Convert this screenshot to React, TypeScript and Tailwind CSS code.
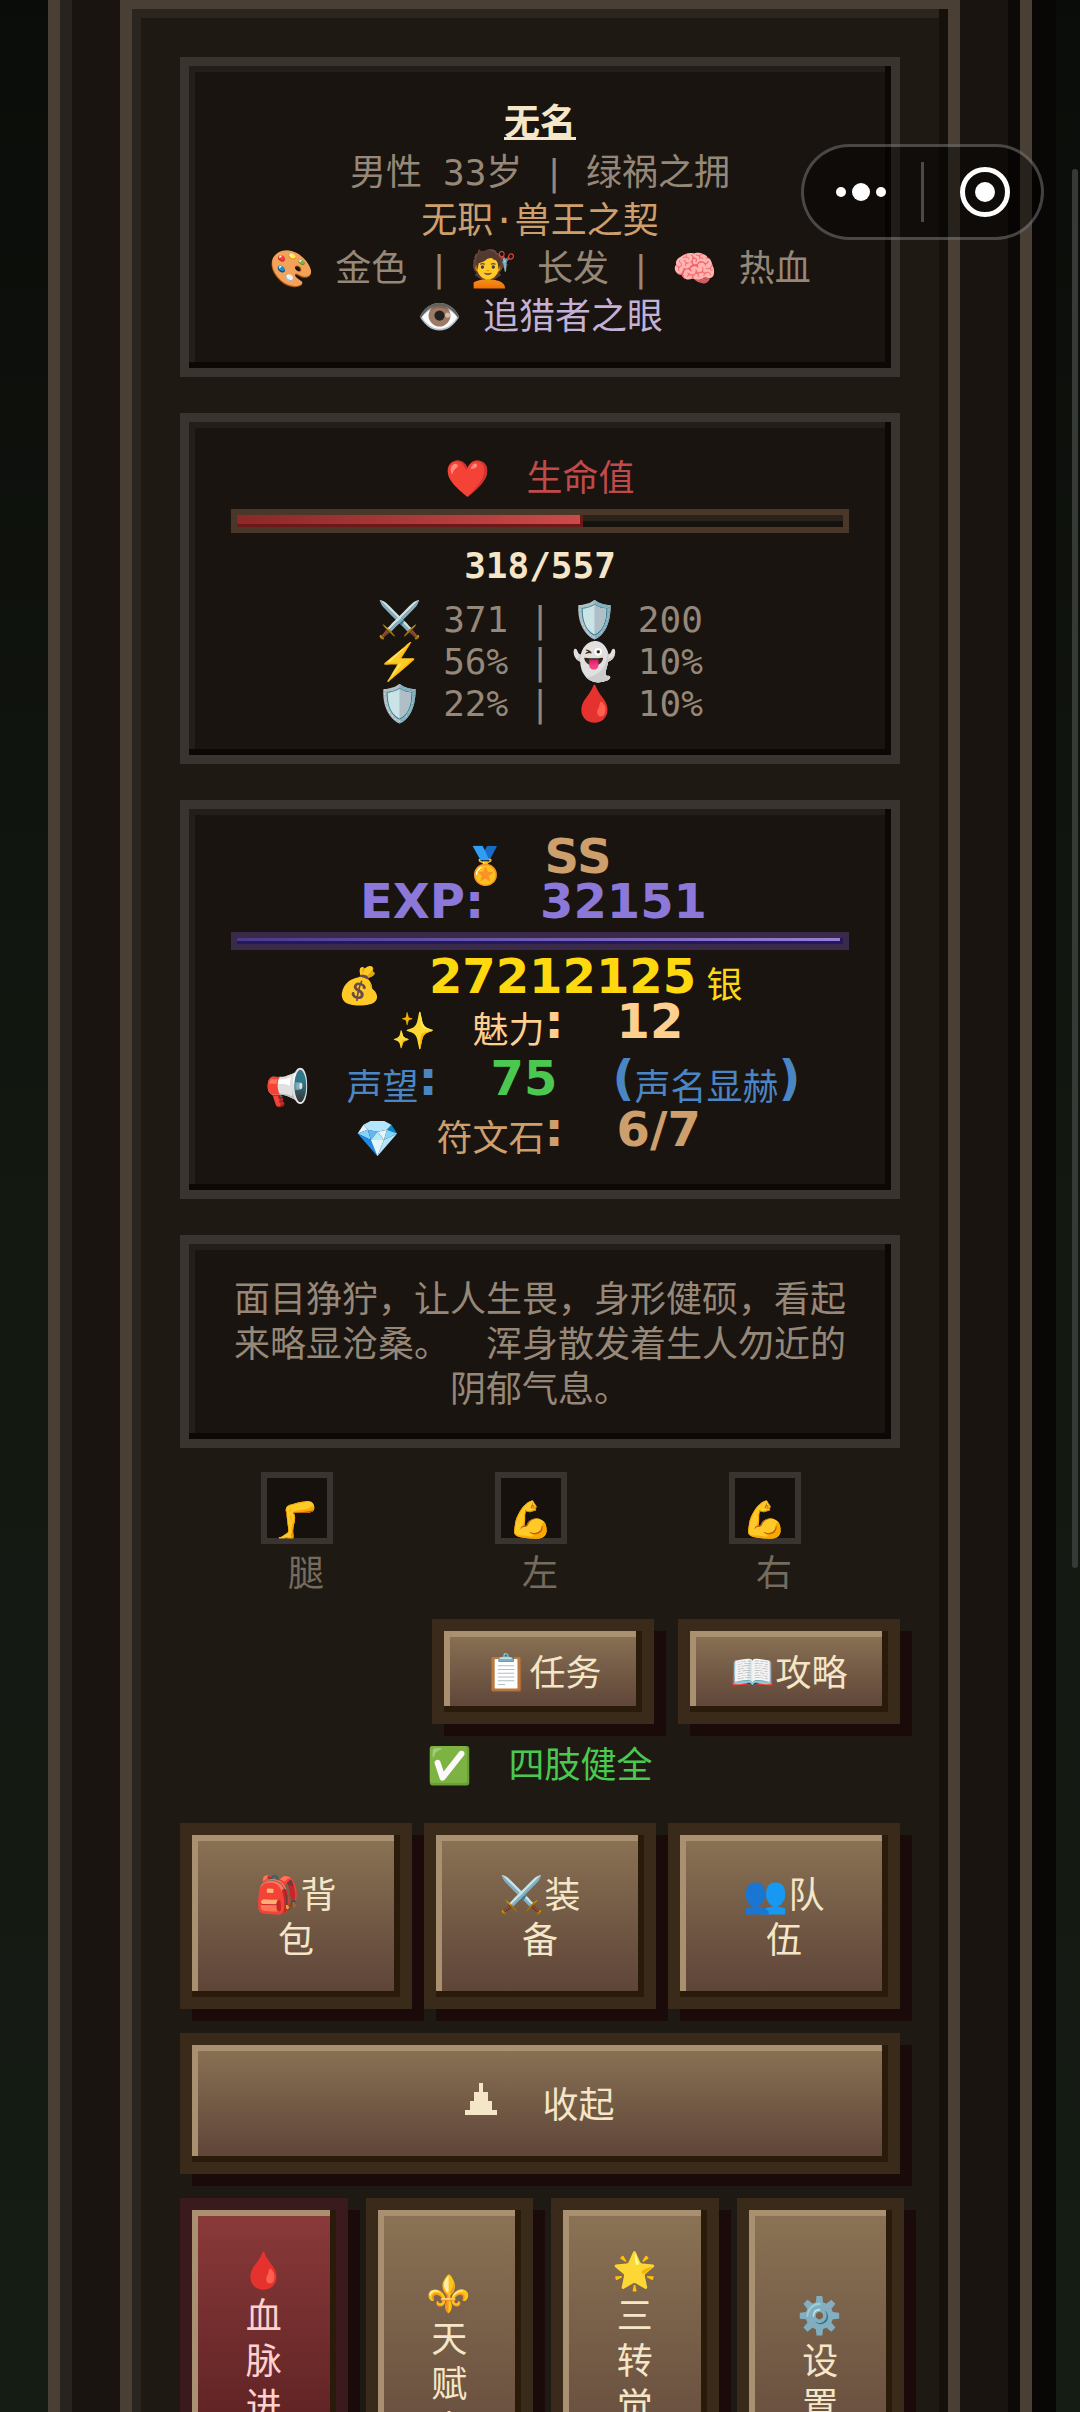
import type { ReactNode } from 'react'

const limbs = [
  { id: 'leg', icon: '🦵', label: '腿' },
  { id: 'left', icon: '💪', label: '左' },
  { id: 'right', icon: '💪', label: '右' },
]

const mainActions = [
  { icon: '🎒', first: '背', second: '包' },
  { icon: '⚔️', first: '装', second: '备' },
  { icon: '👥', first: '队', second: '伍' },
]

const moreActions = [
  { icon: '🩸', label: '血脉进化', danger: true },
  { icon: '⚜️', label: '天赋点', danger: false },
  { icon: '🌟', label: '三转觉醒', danger: false },
  { icon: '⚙️', label: '设置', danger: false },
]

const battleStats = [
  { icon: '⚔️', value: '371', icon2: '🛡️', value2: '200' },
  { icon: '⚡', value: '56%', icon2: '👻', value2: '10%' },
  { icon: '🛡️', value: '22%', icon2: '🩸', value2: '10%' },
]

const hp = 318
const maxHp = 557

const Emoji = ({ children }: { children: ReactNode }) => (
  <span className="w-[45px] shrink-0 text-center font-['Noto_Color_Emoji',sans-serif]">{children}</span>
)

const Card = ({ children }: { children: ReactNode }) => (
  <section className="border-[9px] border-[#393430] bg-[#1a1410] px-[42px] pb-[27px] pt-[33px] shadow-[inset_-6px_-6px_0_#0d0805,inset_6px_6px_0_#231e1a]">
    {children}
  </section>
)

const Pixel = ({ children, className = '' }: { children: ReactNode; className?: string }) => (
  <span className={`font-['DejaVu_Sans',sans-serif] text-[48px] font-bold leading-7 ${className}`}>{children}</span>
)

const StoneButton = ({
  children,
  className = '',
  danger = false,
}: {
  children: ReactNode
  className?: string
  danger?: boolean
}) => {
  const tone = danger
    ? 'border-[#3a1a1c] from-[#8b3a3a] to-[#4f1a1c] text-[#ffd0d0]'
    : 'border-[#3a2a1a] from-[#8b7355] to-[#5c4337] text-[#f5e6c8]'
  return (
    <button
      type="button"
      className={`flex items-center justify-center border-[12px] bg-linear-to-b ${tone} pt-[3px] leading-[45px] shadow-[12px_12px_0_#1a0a0a,inset_-6px_-6px_0_#2a1a0a,inset_6px_6px_0_#a89070] ${className}`}
    >
      {children}
    </button>
  )
}

const ProfileCard = () => (
  <Card>
    <div className="flex flex-col items-center leading-[48px] text-[#968878]">
      <h1 className="mb-[2px] font-bold text-[#f5e6c8] underline decoration-[3px] underline-offset-2">无名</h1>
      <p className="flex gap-[21px]">
        <span>男性</span>
        <span>33岁</span>
        <span>|</span>
        <span>绿祸之拥</span>
      </p>
      <p className="text-[#cd9f6c]">无职·兽王之契</p>
      <p className="flex gap-[21px]">
        <Emoji>🎨</Emoji>
        <span>金色</span>
        <span>|</span>
        <Emoji>💇</Emoji>
        <span>长发</span>
        <span>|</span>
        <Emoji>🧠</Emoji>
        <span>热血</span>
      </p>
      <p className="flex gap-[21px] text-[#c4b2d6]">
        <Emoji>👁️</Emoji>
        <span>追猎者之眼</span>
      </p>
    </div>
  </Card>
)

const HealthCard = () => (
  <Card>
    <p className="flex justify-center gap-9 leading-[48px] text-[#c04a4a]">
      <Emoji>❤️</Emoji>
      <span>生命值</span>
    </p>
    <div className="mt-[6px] h-6 border-[6px] border-[#4a3728] bg-[#15110d] shadow-[inset_0_6px_0_#29231c]">
      <div
        className="h-full bg-linear-to-r from-[#8b2828] to-[#cc4a4a] shadow-[inset_-3px_-3px_0_#6b1818]"
        style={{ width: `${(hp / maxHp) * 100}%` }}
      />
    </div>
    <p className="mt-3 text-center font-bold leading-[42px] text-[#f5e6c8]">
      {hp}/{maxHp}
    </p>
    <div className="mb-[3px] mt-3 leading-[42px] text-[#968878]">
      {battleStats.map((row) => (
        <p key={row.value} className="flex justify-center gap-[21px]">
          <Emoji>{row.icon}</Emoji>
          <span>{row.value}</span>
          <span>|</span>
          <Emoji>{row.icon2}</Emoji>
          <span>{row.value2}</span>
        </p>
      ))}
    </div>
  </Card>
)

const WealthCard = () => (
  <Card>
    <div className="leading-[48px] text-[#cd9f6c]">
      <p className="flex h-[45px] items-start justify-center gap-9">
        <Emoji>🏅</Emoji>
        <Pixel className="w-[72px]">SS</Pixel>
      </p>
      <p className="flex h-[45px] items-start justify-center gap-9 text-[#8c78d8]">
        <Pixel className="w-36">EXP:</Pixel>
        <Pixel className="w-[180px]">32151</Pixel>
      </p>
      <div className="h-[18px] border-[6px] border-[#3a2a4a] bg-[#15110d]">
        <div className="h-full bg-linear-to-r from-[#4a3a8a] to-[#9a7ed8] shadow-[inset_-3px_-3px_0_#221a5c]" />
      </div>
      <p className="mt-3 flex h-[45px] items-start justify-center text-[#ffd90f]">
        <Emoji>💰</Emoji>
        <Pixel className="ml-9 w-[288px] text-center">27212125</Pixel>
        <span>银</span>
      </p>
      <p className="flex h-[57px] items-start justify-center text-[#ffcf8f]">
        <Emoji>✨</Emoji>
        <span className="ml-9">魅力</span>
        <Pixel className="w-[72px]">:</Pixel>
        <Pixel className="w-[72px]">12</Pixel>
      </p>
      <p className="flex h-[51px] items-start justify-center text-[#4a86c4]">
        <Emoji>📢</Emoji>
        <span className="ml-9">声望</span>
        <Pixel className="w-[72px]">:</Pixel>
        <Pixel className="w-[72px] text-[#4ac850]">75</Pixel>
        <Pixel className="w-[72px] text-right">(</Pixel>
        <span>声名显赫</span>
        <Pixel className="w-9">)</Pixel>
      </p>
      <p className="flex h-[48px] items-start justify-center">
        <Emoji>💎</Emoji>
        <span className="ml-9">符文石</span>
        <Pixel className="w-[72px]">:</Pixel>
        <Pixel className="w-[108px]">6/7</Pixel>
      </p>
    </div>
  </Card>
)

const CapsuleMenu = () => (
  <div className="fixed right-9 top-36 flex h-24 w-[243px] items-center rounded-full border-[3px] border-white/25 bg-black/45">
    <button type="button" aria-label="更多" className="flex flex-1 items-center justify-center gap-[6px] pr-1">
      <span className="size-[10px] rounded-full bg-white" />
      <span className="size-[18px] rounded-full bg-white" />
      <span className="size-[10px] rounded-full bg-white" />
    </button>
    <span className="h-[60px] w-[3px] bg-white/25" />
    <button type="button" aria-label="关闭" className="flex flex-1 justify-center pl-1">
      <svg viewBox="0 0 50 50" className="size-[50px]" fill="none">
        <circle cx="25" cy="25" r="22.5" stroke="#fff" strokeWidth="5" />
        <circle cx="25" cy="25" r="10" fill="#fff" />
      </svg>
    </button>
  </div>
)

const App = () => {
  return (
    <div className="h-screen overflow-y-auto bg-linear-to-b from-[#0a0c09] via-[#131811] to-[#151c14] px-12 font-['DejaVu_Sans_Mono','Noto_Sans_CJK_SC',monospace] text-[36px] [scrollbar-width:none]">
      <div className="border-x-[12px] border-[#4a3f35] bg-[#1a1410] px-[60px] shadow-[24px_0_0_#080705,inset_-12px_0_0_#0d0907,inset_12px_0_0_#28231e]">
        <main className="border-x-[12px] border-t-[9px] border-[#4a3f35] bg-[#1e1913] px-12 pb-12 pt-12 shadow-[inset_-9px_0_0_#14110a,inset_9px_9px_0_#2a251f]">
          <div className="flex flex-col gap-9">
            <ProfileCard />
            <HealthCard />
            <WealthCard />
            <Card>
              <p className="text-center leading-[45px] text-[#968878] [text-spacing-trim:space-all]">
                面目狰狞，让人生畏，身形健硕，看起来略显沧桑。　浑身散发着生人勿近的阴郁气息。
              </p>
            </Card>
          </div>

          <div className="mr-[18px] mt-6 grid grid-cols-3">
            {limbs.map((limb) => (
              <div key={limb.id} className="flex flex-col items-center">
                <div className="flex size-[72px] items-end justify-center border-[6px] border-[#393430] bg-[#16110d] leading-9">
                  <Emoji>{limb.icon}</Emoji>
                </div>
                <span className="mt-[6px] pl-[18px] leading-[48px] text-[#756b5e]">{limb.label}</span>
              </div>
            ))}
          </div>

          <div className="ml-[252px] mt-[21px] grid grid-cols-2 gap-6">
            <StoneButton className="h-[105px]">
              <Emoji>📋</Emoji>
              <span>任务</span>
            </StoneButton>
            <StoneButton className="h-[105px]">
              <Emoji>📖</Emoji>
              <span>攻略</span>
            </StoneButton>
          </div>

          <p className="mt-[18px] flex justify-center gap-9 leading-[48px] text-[#4ac850]">
            <Emoji>✅</Emoji>
            <span>四肢健全</span>
          </p>

          <div className="mt-[33px] grid grid-cols-3 gap-3">
            {mainActions.map((action) => (
              <StoneButton key={action.icon} className="h-[186px] flex-col">
                <span className="flex">
                  <Emoji>{action.icon}</Emoji>
                  {action.first}
                </span>
                <span>{action.second}</span>
              </StoneButton>
            ))}
          </div>

          <StoneButton className="mt-6 h-[141px] w-full gap-[45px]">
            <span className="h-[45px]">
              <svg viewBox="0 0 32 32" className="size-8" fill="currentColor" shapeRendering="crispEdges">
                <path d="M14 0h4v9h5v9h4v9h5v5H0v-5h5v-9h4V9h5z" />
              </svg>
            </span>
            <span>收起</span>
          </StoneButton>

          <div className="-mr-1 mt-6 grid grid-cols-4 gap-[18px]">
            {moreActions.map((action) => (
              <StoneButton key={action.label} danger={action.danger} className="h-[324px] flex-col">
                <Emoji>{action.icon}</Emoji>
                <span className="w-9">{action.label}</span>
              </StoneButton>
            ))}
          </div>
        </main>
      </div>
      <CapsuleMenu />
      <div className="fixed right-[2px] top-[169px] h-[58vh] w-[6px] rounded-full bg-[#363a37]" />
    </div>
  )
}

export default App
